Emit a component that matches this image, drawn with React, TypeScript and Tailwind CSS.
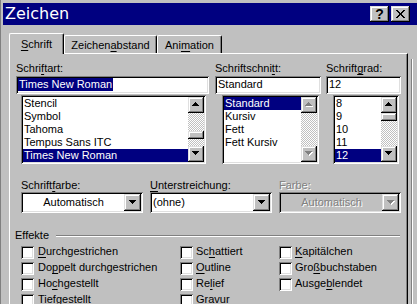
import React from "react";

const RAISED =
  "shadow-[inset_-1px_-1px_0_#000,inset_1px_1px_0_#dfdfdf,inset_-2px_-2px_0_#808080,inset_2px_2px_0_#fff]";
const SUNKEN =
  "shadow-[inset_1px_1px_0_#808080,inset_-1px_-1px_0_#fff,inset_2px_2px_0_#000,inset_-2px_-2px_0_#dfdfdf]";
const CHECKER =
  "[background-image:repeating-conic-gradient(#fff_0_25%,#c0c0c0_0_50%)] [background-size:2px_2px]";

const UP = "M3 0h1v1h1v1h1v1h1v1H0V3h1V2h1V1h1z";
const DOWN = "M0 0h7v1h-1v1h-1v1h-1v1h-1v-1h-1v-1h-1v-1h-1z";

function Arrow({ up, disabled }: { up?: boolean; disabled?: boolean }) {
  const d = up ? UP : DOWN;
  return (
    <svg width="8" height="5" viewBox="0 0 8 5" shapeRendering="crispEdges" className="block">
      {disabled && <path d={d} fill="#fff" transform="translate(1 1)" />}
      <path d={d} fill={disabled ? "#808080" : "#000"} />
    </svg>
  );
}

function CloseGlyph() {
  const rows: number[][] = [
    [0, 1, 7, 8],
    [1, 2, 6, 7],
    [2, 3, 5, 6],
    [3, 4, 5],
    [3, 4, 5],
    [2, 3, 5, 6],
    [1, 2, 6, 7],
    [0, 1, 7, 8],
  ];
  return (
    <svg width="9" height="8" viewBox="0 0 9 8" shapeRendering="crispEdges" className="block">
      {rows.map((cols, y) =>
        cols.map((x) => <rect key={`${x}-${y}`} x={x} y={y} width="1" height="1" fill="#000" />)
      )}
    </svg>
  );
}

function Acc({ t, i }: { t: string; i?: number }) {
  if (i === undefined) return <>{t}</>;
  return (
    <>
      {t.slice(0, i)}
      <span className="underline decoration-1 underline-offset-[2px]">{t[i]}</span>
      {t.slice(i + 1)}
    </>
  );
}

function Scrollbar({ thumb, disabled }: { thumb?: string; disabled?: boolean }) {
  return (
    <div className="w-[16px] shrink-0 flex flex-col">
      <div className={`w-[16px] h-[16px] shrink-0 bg-[#c0c0c0] ${RAISED} flex justify-center pt-[5px]`}>
        <Arrow up disabled={disabled} />
      </div>
      <div className={`flex-1 flex flex-col ${CHECKER}`}>
        {thumb !== undefined && (
          <div className={`${thumb} w-[16px] h-[8px] bg-[#c0c0c0] ${RAISED}`} />
        )}
      </div>
      <div className={`w-[16px] h-[16px] shrink-0 bg-[#c0c0c0] ${RAISED} flex justify-center pt-[5px]`}>
        <Arrow disabled={disabled} />
      </div>
    </div>
  );
}

function ListBox({
  className,
  items,
  sel,
  thumb,
  disabled,
}: {
  className: string;
  items: string[];
  sel: number;
  thumb?: string;
  disabled?: boolean;
}) {
  return (
    <div className={`${className} h-[69px] mt-[1px] bg-white ${SUNKEN} p-[2px] flex`}>
      <div className="flex-1 min-w-0 flex flex-col">
        {items.map((t, i) => (
          <div
            key={t}
            className={`h-[13px] pl-[1px] whitespace-nowrap overflow-hidden ${
              i === sel ? "bg-[#000080] text-white" : ""
            }`}
          >
            {t}
          </div>
        ))}
      </div>
      <Scrollbar thumb={thumb} disabled={disabled} />
    </div>
  );
}

function Combo({
  children,
  disabled,
  center,
}: {
  children: React.ReactNode;
  disabled?: boolean;
  center?: boolean;
}) {
  return (
    <div className={`h-[21px] ${disabled ? "bg-[#c0c0c0]" : "bg-white"} ${SUNKEN} p-[2px] flex`}>
      <div className={`flex-1 flex items-center whitespace-nowrap ${center ? "justify-center" : "pl-[1px]"}`}>
        {children}
      </div>
      <div className={`w-[17px] h-[17px] shrink-0 bg-[#c0c0c0] ${RAISED} pl-[5px] pt-[6px]`}>
        <Arrow disabled={disabled} />
      </div>
    </div>
  );
}

function Check({ t, i, gap }: { t: string; i?: number; gap: string }) {
  return (
    <div className={`h-[16px] flex items-start ${gap}`}>
      <div className={`w-[13px] h-[13px] shrink-0 bg-white ${SUNKEN}`} />
      <span className="-mt-[1px] whitespace-nowrap">
        <Acc t={t} i={i} />
      </span>
    </div>
  );
}

export default function App() {
  return (
    <div className="w-[417px] h-[304px] overflow-hidden bg-[#c0c0c0] border-l border-[#808080] flex flex-col font-['Liberation_Sans',Arial,sans-serif] text-[11px] leading-[13px] text-black select-none">
      {/* Title bar */}
      <div className="mt-[3px] ml-[2px] h-[22px] shrink-0 bg-[#000080] flex items-center justify-between pr-[7px]">
        <span className="pl-[2px] font-['DejaVu_Sans',sans-serif] text-[16px] leading-[22px] text-white">
          Zeichen
        </span>
        <div className="flex gap-[2px]">
          <div
            className={`w-[19px] h-[16px] bg-[#c0c0c0] ${RAISED} flex items-center justify-center font-bold text-[14px] leading-[14px]`}
          >
            ?
          </div>
          <div className={`w-[19px] h-[16px] bg-[#c0c0c0] ${RAISED} pl-[5px] pt-[4px]`}>
            <CloseGlyph />
          </div>
        </div>
      </div>

      {/* Tabs */}
      <div className="relative z-10 mt-[8px] ml-[8px] h-[21px] shrink-0 flex items-end">
        <div className="w-[55px] h-[21px] bg-[#c0c0c0] border-l border-t border-r border-l-white border-t-white border-r-black rounded-t-[2px] shadow-[inset_-1px_0_0_#808080] pt-[4px] text-center whitespace-nowrap">
          <Acc t="Schrift" i={0} />
        </div>
        <div className="w-[93px] h-[18px] mb-[1px] border-l border-t border-r border-l-white border-t-white border-r-black rounded-t-[2px] shadow-[inset_-1px_0_0_#808080] pt-[3px] text-center whitespace-nowrap">
          <Acc t="Zeichenabstand" i={7} />
        </div>
        <div className="w-[65px] h-[18px] mb-[1px] border-l border-t border-r border-l-white border-t-white border-r-black rounded-t-[2px] shadow-[inset_-1px_0_0_#808080] pt-[3px] text-center whitespace-nowrap">
          <Acc t="Animation" i={3} />
        </div>
      </div>

      {/* Panel */}
      <div className="-mt-[1px] flex flex-1 min-h-0">
        <div className="ml-[8px] w-[399px] shrink-0 border-l border-t border-r border-l-white border-t-white border-r-black shadow-[inset_-1px_0_0_#808080] flex flex-col">
          {/* Row 1: font lists */}
          <div className="flex mt-[8px]">
            <div className="ml-[6px] w-[193px] flex flex-col">
              <div className="h-[13px] whitespace-nowrap">
                <Acc t="Schriftart:" i={5} />
              </div>
              <div className={`mt-[1px] h-[18px] bg-white ${SUNKEN} pt-[2px] pl-[2px] whitespace-nowrap`}>
                <span className="bg-[#000080] text-white px-[1px] inline-block h-[13px]">Times New Roman</span>
              </div>
              <ListBox
                className="ml-[5px] w-[185px]"
                items={["Stencil", "Symbol", "Tahoma", "Tempus Sans ITC", "Times New Roman"]}
                sel={4}
                thumb="mt-[18px]"
              />
            </div>
            <div className="ml-[6px] w-[106px] flex flex-col">
              <div className="h-[13px] whitespace-nowrap">
                <Acc t="Schriftschnitt:" i={12} />
              </div>
              <div className={`mt-[1px] h-[18px] bg-white ${SUNKEN} pt-[2px] pl-[3px] whitespace-nowrap`}>
                Standard
              </div>
              <ListBox
                className="ml-[7px] w-[97px]"
                items={["Standard", "Kursiv", "Fett", "Fett Kursiv"]}
                sel={0}
                disabled
              />
            </div>
            <div className="ml-[5px] w-[75px] flex flex-col">
              <div className="h-[13px] whitespace-nowrap">
                <Acc t="Schriftgrad:" i={7} />
              </div>
              <div className={`mt-[1px] h-[18px] bg-white ${SUNKEN} pt-[2px] pl-[3px] whitespace-nowrap`}>
                12
              </div>
              <ListBox
                className="ml-[7px] w-[66px]"
                items={["8", "9", "10", "11", "12"]}
                sel={4}
                thumb="mt-0"
              />
            </div>
          </div>

          {/* Row 2: combos */}
          <div className="flex mt-[15px] ml-[11px] gap-[7px]">
            <div className="w-[122px] flex flex-col">
              <div className="h-[13px] whitespace-nowrap">
                <Acc t="Schriftfarbe:" i={7} />
              </div>
              <Combo center>Automatisch</Combo>
            </div>
            <div className="w-[122px] flex flex-col">
              <div className="h-[13px] whitespace-nowrap">
                <Acc t="Unterstreichung:" i={0} />
              </div>
              <Combo>(ohne)</Combo>
            </div>
            <div className="w-[122px] flex flex-col">
              <div className="h-[13px] whitespace-nowrap text-[#808080] [text-shadow:1px_1px_0_#fff]">Farbe:</div>
              <Combo center disabled>
                <span className="text-[#808080] [text-shadow:1px_1px_0_#fff]">Automatisch</span>
              </Combo>
            </div>
          </div>

          {/* Effekte */}
          <div className="mt-[16px] ml-[5px] w-[385px] h-[13px] flex items-center gap-[7px]">
            <span className="whitespace-nowrap">Effekte</span>
            <div className="flex-1 h-[2px] border-t border-b border-t-[#808080] border-b-white" />
          </div>

          <div className="mt-[4px] ml-[11px] flex">
            <div className="w-[159px] flex flex-col">
              <Check t="Durchgestrichen" i={0} gap="gap-[4px]" />
              <Check t="Doppelt durchgestrichen" i={2} gap="gap-[4px]" />
              <Check t="Hochgestellt" i={2} gap="gap-[4px]" />
              <Check t="Tiefgestellt" gap="gap-[4px]" />
            </div>
            <div className="w-[99px] flex flex-col">
              <Check t="Schattiert" i={2} gap="gap-[3px]" />
              <Check t="Outline" i={0} gap="gap-[3px]" />
              <Check t="Relief" i={2} gap="gap-[3px]" />
              <Check t="Gravur" gap="gap-[3px]" />
            </div>
            <div className="flex flex-col">
              <Check t="Kapitälchen" i={0} gap="gap-[3px]" />
              <Check t="Großbuchstaben" i={3} gap="gap-[3px]" />
              <Check t="Ausgeblendet" i={5} gap="gap-[3px]" />
            </div>
          </div>
        </div>
        <div className="ml-[3px] mt-[6px] w-[1px] bg-[#808080]" />
        <div className="mt-[6px] w-[1px] bg-white" />
      </div>
    </div>
  );
}
